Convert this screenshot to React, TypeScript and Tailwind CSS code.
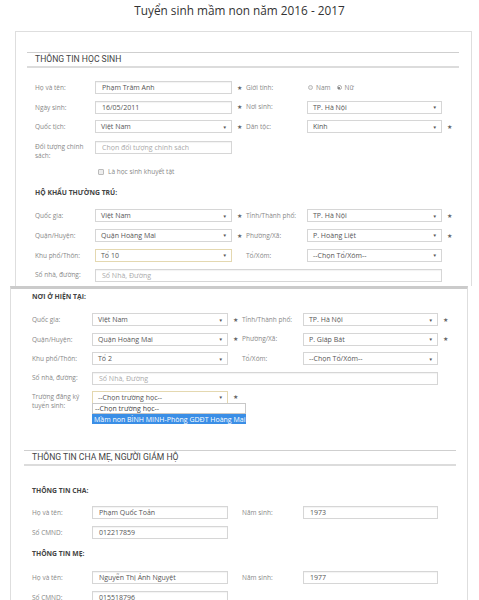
import type { ReactNode } from 'react';

const sans = "font-['Open_Sans',sans-serif]";

const Star = () => <span className="text-[6px] leading-none text-[#666]">★</span>;

const TextBox = ({ value, placeholder, tone }: { value?: string; placeholder?: string; tone?: 'focus' }) => (
    <div
        className={`h-[13px] border ${tone === 'focus' ? 'border-[#e4d8b0]' : 'border-[#d6d6d6]'} bg-white flex items-center pl-[6px] text-[7px] leading-none ${value ? 'text-[#555]' : 'text-[#aaa]'} shadow-[inset_0_1px_1px_rgba(0,0,0,0.05)]`}
    >
        {value ?? placeholder}
    </div>
);

const SelectBox = ({ value, tone }: { value: string; tone?: 'focus' }) => (
    <div
        className={`h-[13px] border ${tone === 'focus' ? 'border-[#e4d8b0]' : 'border-[#d6d6d6]'} bg-white flex items-center justify-between pl-[5px] pr-[4px] text-[7px] leading-none text-[#555]`}
    >
        <span>{value}</span>
        <span className="text-[4.5px] text-[#555]">▼</span>
    </div>
);

interface RowProps {
    cols: string;
    label: ReactNode;
    left?: ReactNode;
    leftStar?: boolean;
    label2?: string;
    right?: ReactNode;
    rightStar?: boolean;
    h?: string;
}

const Row = ({ cols, label, left, leftStar, label2, right, rightStar, h = 'h-[19.5px]' }: RowProps) => (
    <div className={`grid ${cols} items-center ${h}`}>
        <div className="text-[6.5px] leading-[9px] text-[#888]">{label}</div>
        <div>{left}</div>
        <div className="flex justify-center">{leftStar && <Star />}</div>
        <div className="text-[6.5px] text-[#888]">{label2}</div>
        <div>{right}</div>
        <div className="flex justify-center">{rightStar && <Star />}</div>
    </div>
);

const Heading = ({ children }: { children: ReactNode }) => (
    <div className="border-t border-[#cfcfcf] border-b-2 border-b-[#dcdcdc] h-[16px] flex items-center pl-[8px] font-['Roboto',sans-serif] text-[8.6px] text-[#444]">
        {children}
    </div>
);

const SubHeading = ({ children, h }: { children: ReactNode; h: string }) => (
    <div className={`${h} flex items-center text-[6.8px] font-bold text-[#444]`}>{children}</div>
);

const COLS1 = 'grid-cols-[60px_137px_14px_61px_135px_14px]';
const COLS2 = 'grid-cols-[60px_136px_14px_61px_135px_14px]';

export default function App() {
    return (
        <div className={`w-[479px] h-[600px] overflow-hidden bg-white ${sans}`}>
            <div className="h-[22px] flex items-center justify-center text-[11.8px] text-[#333]">
                Tuyển sinh mầm non năm 2016 - 2017
            </div>

            {/* first capture: student info */}
            <div className="mt-[9px] ml-[15px] w-[457px] h-[255px] border border-b-0 border-[#dedede] overflow-hidden">
                <div className="mt-[20px] ml-[11px] mr-[12px]">
                    <Heading>THÔNG TIN HỌC SINH</Heading>
                </div>
                <div className="pl-[19px] pt-[10px]">
                    <Row
                        cols={COLS1}
                        label="Họ và tên:"
                        left={<TextBox value="Phạm Trâm Anh" />}
                        leftStar
                        label2="Giới tính:"
                        right={
                            <div className="flex items-center text-[6.5px] text-[#888] pl-[1px]">
                                <span className="w-[5px] h-[5px] rounded-full border border-[#bbb] bg-[#eee]" />
                                <span className="ml-[3px]">Nam</span>
                                <span className="ml-[6px] w-[5px] h-[5px] rounded-full border border-[#aaa] bg-white flex items-center justify-center">
                                    <span className="w-[2px] h-[2px] rounded-full bg-[#666]" />
                                </span>
                                <span className="ml-[3px]">Nữ</span>
                            </div>
                        }
                    />
                    <Row
                        cols={COLS1}
                        label="Ngày sinh:"
                        left={<TextBox value="16/05/2011" />}
                        leftStar
                        label2="Nơi sinh:"
                        right={<SelectBox value="TP. Hà Nội" />}
                    />
                    <Row
                        cols={COLS1}
                        label="Quốc tịch:"
                        left={<SelectBox value="Việt Nam" />}
                        leftStar
                        label2="Dân tộc:"
                        right={<SelectBox value="Kinh" />}
                        rightStar
                    />
                    <div className={`grid ${COLS1} items-start h-[26px] pt-[4.5px]`}>
                        <div className="text-[6.5px] leading-[9px] text-[#888] pt-[1px]">
                            Đối tượng chính
                            <br />
                            sách:
                        </div>
                        <TextBox placeholder="Chọn đối tượng chính sách" />
                    </div>
                    <div className={`grid ${COLS1} items-center h-[19.5px]`}>
                        <div />
                        <div className="flex items-center pl-[3px] text-[6.5px] text-[#888]">
                            <span className="w-[6px] h-[6px] border border-[#bbb] bg-[#eee] rounded-[1px]" />
                            <span className="ml-[4px]">Là học sinh khuyết tật</span>
                        </div>
                    </div>
                    <SubHeading h="h-[22px]">HỘ KHẨU THƯỜNG TRÚ:</SubHeading>
                    <div className="h-[2px]" />
                    <Row
                        cols={COLS1}
                        h="h-[19.75px]"
                        label="Quốc gia:"
                        left={<SelectBox value="Việt Nam" />}
                        leftStar
                        label2="Tỉnh/Thành phố:"
                        right={<SelectBox value="TP. Hà Nội" />}
                        rightStar
                    />
                    <Row
                        cols={COLS1}
                        h="h-[19.75px]"
                        label="Quận/Huyện:"
                        left={<SelectBox value="Quận Hoàng Mai" />}
                        leftStar
                        label2="Phường/Xã:"
                        right={<SelectBox value="P. Hoàng Liệt" />}
                        rightStar
                    />
                    <Row
                        cols={COLS1}
                        h="h-[19.75px]"
                        label="Khu phố/Thôn:"
                        left={<SelectBox value="Tổ 10" tone="focus" />}
                        label2="Tổ/Xóm:"
                        right={<SelectBox value="--Chọn Tổ/Xóm--" />}
                    />
                    <div className="grid grid-cols-[60px_347px] items-center h-[19.75px]">
                        <div className="text-[6.5px] text-[#888]">Số nhà, đường:</div>
                        <TextBox placeholder="Số Nhà, Đường" />
                    </div>
                </div>
            </div>

            {/* second capture: current address and parents */}
            <div className="ml-[10px] w-[458px] border-t-[3px] border-t-[#cbcbcb] border-x border-x-[#dedede] h-[320px]">
                <div className="pl-[21px]">
                    <SubHeading h="h-[16px]">NƠI Ở HIỆN TẠI:</SubHeading>
                    <div className="h-[5px]" />
                    <Row
                        cols={COLS2}
                        label="Quốc gia:"
                        left={<SelectBox value="Việt Nam" />}
                        leftStar
                        label2="Tỉnh/Thành phố:"
                        right={<SelectBox value="TP. Hà Nội" />}
                        rightStar
                    />
                    <Row
                        cols={COLS2}
                        label="Quận/Huyện:"
                        left={<SelectBox value="Quận Hoàng Mai" />}
                        leftStar
                        label2="Phường/Xã:"
                        right={<SelectBox value="P. Giáp Bát" />}
                        rightStar
                    />
                    <Row
                        cols={COLS2}
                        label="Khu phố/Thôn:"
                        left={<SelectBox value="Tổ 2" />}
                        label2="Tổ/Xóm:"
                        right={<SelectBox value="--Chọn Tổ/Xóm--" />}
                    />
                    <div className="grid grid-cols-[60px_346px] items-center h-[19.5px]">
                        <div className="text-[6.5px] text-[#888]">Số nhà, đường:</div>
                        <TextBox placeholder="Số Nhà, Đường" />
                    </div>
                    <div className={`grid ${COLS2} items-start h-[22px] pt-[3px]`}>
                        <div className="text-[6.5px] leading-[9px] text-[#888] pt-[0.5px]">
                            Trường đăng ký
                            <br />
                            tuyển sinh:
                        </div>
                        <div className="relative">
                            <SelectBox value="--Chọn trường học--" tone="focus" />
                            <div className="absolute left-0 top-[12px] w-[154px] z-10 text-[7px] leading-none">
                                <div className="h-[11px] border border-[#c8c8c8] bg-white flex items-center pl-[2px] text-[#444]">
                                    --Chọn trường học--
                                </div>
                                <div className="h-[10px] bg-[#3a8ee6] flex items-center pl-[2px] text-white">
                                    Mầm non BÌNH MINH-Phòng GDĐT Hoàng Mai
                                </div>
                            </div>
                        </div>
                        <div className="flex justify-center pt-[3px]">
                            <Star />
                        </div>
                    </div>
                </div>

                <div className="mt-[40px] ml-[13px] mr-[11px]">
                    <Heading>THÔNG TIN CHA MẸ, NGƯỜI GIÁM HỘ</Heading>
                </div>

                <div className="pl-[21px]">
                    <div className="h-[16px]" />
                    <SubHeading h="h-[18px]">THÔNG TIN CHA:</SubHeading>
                    <div className="h-[3px]" />
                    <Row
                        cols={COLS2}
                        label="Họ và tên:"
                        left={<TextBox value="Phạm Quốc Toản" />}
                        label2="Năm sinh:"
                        right={<TextBox value="1973" />}
                    />
                    <Row cols={COLS2} label="Số CMND:" left={<TextBox value="012217859" />} />
                    <SubHeading h="h-[23.5px]">THÔNG TIN MẸ:</SubHeading>
                    <div className="h-[2.5px]" />
                    <Row
                        cols={COLS2}
                        label="Họ và tên:"
                        left={<TextBox value="Nguyễn Thị Ánh Nguyệt" />}
                        label2="Năm sinh:"
                        right={<TextBox value="1977" />}
                    />
                    <Row cols={COLS2} label="Số CMND:" left={<TextBox value="015518796" />} />
                </div>
            </div>
        </div>
    );
}
